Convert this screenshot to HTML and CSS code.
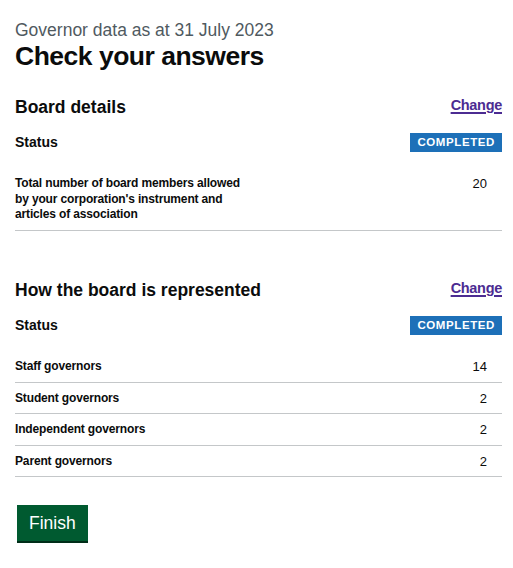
FILE: index.html
```html
<!DOCTYPE html>
<html lang="en">
<head>
<meta charset="utf-8">
<title>Check your answers</title>
<link rel="stylesheet" href="styles.css">
</head>
<body>
<main class="page">
  <span class="caption">Governor data as at 31 July 2023</span>
  <h1 class="title">Check your answers</h1>

  <section class="section">
    <div class="section-head">
      <h2 class="section-title">Board details</h2>
      <a class="change-link" href="#">Change</a>
    </div>
    <div class="status-row">
      <span class="status-label">Status</span>
      <strong class="tag">Completed</strong>
    </div>
    <dl class="summary">
      <div class="summary-row">
        <dt class="summary-key">Total number of board members allowed by your corporation's instrument and articles of association</dt>
        <dd class="summary-value">20</dd>
      </div>
    </dl>
  </section>

  <section class="section section-second">
    <div class="section-head">
      <h2 class="section-title">How the board is represented</h2>
      <a class="change-link" href="#">Change</a>
    </div>
    <div class="status-row">
      <span class="status-label">Status</span>
      <strong class="tag">Completed</strong>
    </div>
    <dl class="summary">
      <div class="summary-row">
        <dt class="summary-key">Staff governors</dt>
        <dd class="summary-value">14</dd>
      </div>
      <div class="summary-row">
        <dt class="summary-key">Student governors</dt>
        <dd class="summary-value">2</dd>
      </div>
      <div class="summary-row">
        <dt class="summary-key">Independent governors</dt>
        <dd class="summary-value">2</dd>
      </div>
      <div class="summary-row">
        <dt class="summary-key">Parent governors</dt>
        <dd class="summary-value">2</dd>
      </div>
    </dl>
  </section>

  <button class="button" type="button">Finish</button>
</main>
</body>
</html>
```

FILE: styles.css
```css
* {
  box-sizing: border-box;
}

html, body {
  margin: 0;
  padding: 0;
  background: #ffffff;
}

body {
  font-family: "Liberation Sans", Arial, sans-serif;
  color: #0b0c0c;
}

.page {
  display: flex;
  flex-direction: column;
  align-items: stretch;
  padding: 20px 11px 20px 15px;
}

.caption {
  display: block;
  font-size: 17.5px;
  line-height: 20px;
  color: #505a5f;
}

.title {
  margin: 1px 0 0;
  font-size: 26.5px;
  line-height: 30px;
  font-weight: 700;
  letter-spacing: -0.5px;
}

.section {
  margin-top: 26px;
}

.section-second {
  margin-top: 49.5px;
}

.section-head {
  display: flex;
  justify-content: space-between;
  align-items: flex-start;
}

.section-title {
  margin: 0;
  font-size: 17.5px;
  line-height: 20px;
  font-weight: 700;
}

.change-link {
  font-size: 14.5px;
  line-height: 16px;
  font-weight: 700;
  letter-spacing: -0.3px;
  color: #4c2c92;
  text-decoration: underline;
  text-decoration-thickness: 1.5px;
  text-underline-offset: 2px;
}

.status-row {
  display: flex;
  justify-content: space-between;
  align-items: center;
  margin-top: 16px;
  height: 19px;
}

.status-label {
  font-size: 14px;
  line-height: 19px;
  font-weight: 700;
}

.tag {
  display: inline-block;
  background: #1d70b8;
  color: #ffffff;
  font-size: 11.5px;
  line-height: 13px;
  font-weight: 700;
  letter-spacing: 0.6px;
  text-transform: uppercase;
  padding: 3px 7px 3px 7px;
}

.summary {
  margin: 16px 0 0;
}

.summary-row {
  display: flex;
  align-items: flex-start;
  border-bottom: 1px solid #c4c7c9;
  padding: 8px 0 7px;
}

.summary-key {
  flex: 0 0 48%;
  margin: 0;
  font-size: 12px;
  line-height: 15.5px;
  font-weight: 700;
  letter-spacing: -0.15px;
}

.summary-value {
  flex: 1 1 auto;
  margin: 0;
  padding-right: 15px;
  text-align: right;
  font-size: 13px;
  line-height: 15.5px;
}

.button {
  align-self: flex-start;
  margin: 28px 0 0 2px;
  padding: 8px 12px;
  border: 0;
  border-radius: 0;
  background: #005a30;
  box-shadow: 0 2px 0 #002d18;
  color: #ffffff;
  font-family: "Liberation Sans", Arial, sans-serif;
  font-size: 17.5px;
  line-height: 20px;
  cursor: pointer;
}
```
